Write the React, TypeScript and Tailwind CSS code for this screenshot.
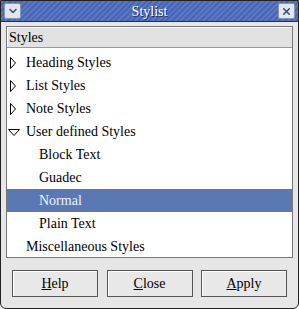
import { ChevronDown, X } from "lucide-react";

const rows = [
  { label: "Heading Styles", arrow: "right", indent: 0 },
  { label: "List Styles", arrow: "right", indent: 0 },
  { label: "Note Styles", arrow: "right", indent: 0 },
  { label: "User defined Styles", arrow: "down", indent: 0 },
  { label: "Block Text", arrow: "none", indent: 2 },
  { label: "Guadec", arrow: "none", indent: 2 },
  { label: "Normal", arrow: "none", indent: 2, selected: true },
  { label: "Plain Text", arrow: "none", indent: 2 },
  { label: "Miscellaneous Styles", arrow: "none", indent: 1 },
];

const Expander = ({ dir }: { dir: string }) => {
  if (dir === "none") return null;
  return (
    <svg width="12" height="12" viewBox="0 0 12 12" className="shrink-0">
      {dir === "right" ? (
        <path d="M2.5 0.5 L7.5 6 L2.5 11.5 Z" fill="white" stroke="black" strokeWidth="1" />
      ) : (
        <path d="M0.5 3.5 L11.5 3.5 L6 9.5 Z" fill="white" stroke="black" strokeWidth="1" />
      )}
    </svg>
  );
};

const DialogButton = ({ k, rest }: { k: string; rest: string }) => (
  <button className="w-[86px] h-[27px] border border-[#555] bg-[#e8e8e8] shadow-[inset_1px_1px_0_#fff] text-[14px] text-black">
    <span className="underline">{k}</span>
    {rest}
  </button>
);

export default function App() {
  return (
    <div
      className="w-[299px] h-[309px] bg-[#e6e6e6] border border-[#222] rounded-br-[6px] rounded-bl-[6px] flex flex-col overflow-hidden"
      style={{ fontFamily: '"Liberation Serif", serif' }}
    >
      <div className="h-[21px] shrink-0 flex items-center justify-between px-[3px] border-b border-[#1e2f5a] bg-[repeating-linear-gradient(135deg,#5878c4_0px,#5878c4_2px,#4866b3_2px,#4866b3_4px)]">
        <div className="w-[17px] h-[16px] rounded-[2px] border border-[#8a95aa] bg-[#e2e6ee] flex items-center justify-center">
          <ChevronDown className="w-[12px] h-[12px] text-[#3d4f78]" strokeWidth={3} />
        </div>
        <span className="text-white text-[14px] [text-shadow:1px_1px_0_#1c2c55]">Stylist</span>
        <div className="w-[17px] h-[16px] rounded-[2px] border border-[#8a95aa] bg-[#e2e6ee] flex items-center justify-center">
          <X className="w-[11px] h-[11px] text-[#3d4f78]" strokeWidth={3.5} />
        </div>
      </div>

      <div className="mx-[5px] mt-[4px] h-[232px] border border-[#777] bg-white flex flex-col">
        <div className="h-[21px] shrink-0 bg-[#e2e2e2] border-b border-[#999] shadow-[inset_1px_1px_0_#fff] px-[2px] flex items-center text-[14px]">
          Styles
        </div>
        <div className="flex flex-col pt-[3px]">
          {rows.map((r) => (
            <div
              key={r.label}
              className={`h-[23px] flex items-center gap-[6px] text-[14px] ${
                r.selected ? "bg-[#5a78b3] text-[#eef3ff]" : "text-black"
              } ${r.indent === 2 ? "pl-[32px]" : r.indent === 1 ? "pl-[19px]" : "pl-[1px]"}`}
            >
              <Expander dir={r.arrow} />
              <span>{r.label}</span>
            </div>
          ))}
        </div>
      </div>

      <div className="flex justify-between px-[11px] pt-[12px]">
        <DialogButton k="H" rest="elp" />
        <DialogButton k="C" rest="lose" />
        <DialogButton k="A" rest="pply" />
      </div>
    </div>
  );
}
